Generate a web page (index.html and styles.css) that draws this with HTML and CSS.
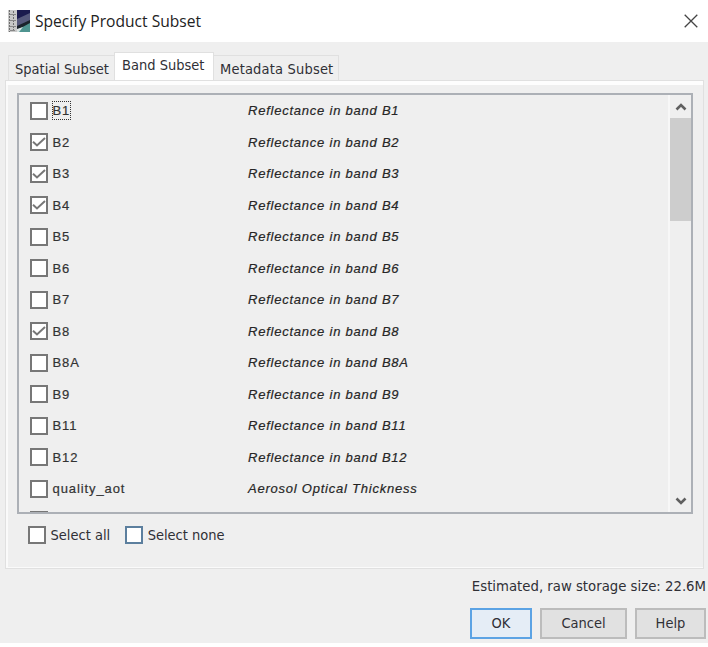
FILE: index.html
```
<!DOCTYPE html>
<html lang="en">
<head>
<meta charset="utf-8">
<title>Specify Product Subset</title>
<link rel="stylesheet" href="styles.css">
</head>
<body>
<div class="dialog">
  <header class="titlebar">
    <svg class="logo" viewBox="0 0 22 22" width="22" height="22">
      <path fill="#c9c9c9" d="M0 0h9v22H0z"/>
      <path stroke="#6e6e6e" stroke-width="1" stroke-dasharray="2 1" d="M1.500 0v22M5.500 1v21"/>
      <path stroke="#888" stroke-width="1" d="M2 4.500h6M2 10.500h6M2 16.500h6M2 20.500h5"/>
      <path fill="#1b1b4e" d="M9 0h13v22H9z"/>
      <path fill="#56597c" d="M9 9 22 3v8L9 17z"/>
      <path fill="#1b222b" d="M9 16 22 10v5L9 21z"/>
      <path fill="#4f9490" d="M9 20l13-7v9H9z"/>
      <path fill="#dce5e5" d="M9 19l6-2-4 5H9z"/>
    </svg>
    <h1 class="title">Specify Product Subset</h1>
    <svg class="close" viewBox="0 0 14 14" width="14" height="14"><path d="M.7.7l12.600 12.600M13.300.7L.7 13.300" stroke="#444" stroke-width="1.300"/></svg>
  </header>
  <nav class="tabs">
    <div class="tab tab-first">Spatial Subset</div>
    <div class="tab tab-active">Band Subset</div>
    <div class="tab tab-last">Metadata Subset</div>
  </nav>
  <main class="panel">
    <div class="listbox">
      <div class="rows" id="rows"></div>
      <div class="scrollbar">
        <svg viewBox="0 0 12 8" width="12" height="8"><path d="M1.500 6.500 6 2l4.500 4.500" fill="none" stroke="#606060" stroke-width="2.600"/></svg>
        <div class="thumb"></div>
        <svg class="down" viewBox="0 0 12 8" width="12" height="8"><path d="M1.500 1.500 6 6l4.500-4.500" fill="none" stroke="#606060" stroke-width="2.600"/></svg>
      </div>
    </div>
    <div class="selectors">
      <label class="choice"><span class="box"></span>Select all</label>
      <label class="choice"><span class="box box-hot"></span>Select none</label>
    </div>
  </main>
  <p class="estimate">Estimated, raw storage size: 22.6M</p>
  <footer class="buttons">
    <button class="btn btn-ok">OK</button>
    <button class="btn btn-cancel">Cancel</button>
    <button class="btn btn-help">Help</button>
  </footer>
</div>
<script src="bands.js"></script>
</body>
</html>
```
FILE: styles.css
```
* { box-sizing: border-box; }
body {
  margin: 0;
  background: #fff;
  color: #303036;
  font: 14.5px/20px "DejaVu Sans Condensed", "DejaVu Sans", sans-serif;
  font-stretch: condensed;
}
.dialog { width: 708px; height: 643px; background: #efefef; overflow: hidden; }
.titlebar { display: flex; align-items: center; height: 42px; padding: 0 10px 1px 8px; background: #fff; }
.logo { margin-right: 5px; }
.title { margin: 0; flex: 1; font: 15.6px/22px "Open Sans", sans-serif; color: #222; }

.tabs { display: flex; align-items: flex-end; height: 38px; padding-left: 8px; }
.tab { height: 25px; padding: 3px 0 0 6px; border: 1.5px solid #e0e0e0; border-bottom: 0; white-space: nowrap; }
.tab-first { width: 106px; border-right: 0; }
.tab-active { width: 100px; height: 28px; padding: 2px 0 0 7px; background: #fff; }
.tab-last { width: 125px; border-left: 0; letter-spacing: .18px; }

.panel {
  width: 699px;
  height: 489px;
  margin-left: 5px;
  padding: 12px 10px 0 11px;
  border: 1px solid #e0e0e0;
  box-shadow: inset 0 4px #fdfdfd, inset 2px 0 #fafafa, inset 0 -1px #fafafa;
}
.listbox { display: flex; height: 421px; border: 2px solid #acb0b6; overflow: hidden; }
.rows {
  flex: 1;
  overflow: hidden;
  font: 13px/31.5px "Liberation Sans", Arial, sans-serif;
  letter-spacing: .77px;
  color: #333;
  -webkit-text-stroke: .2px #333;
}
.row {
  display: grid;
  grid-template-columns: 18px 190.500px 1fr;
  align-items: center;
  column-gap: 5px;
  height: 31.5px;
  padding-left: 10.500px;
}
.row em { color: #222; }
.name { justify-self: start; line-height: 17px; letter-spacing: .9px; }
.focused { outline: 1px dotted #333; }
.box { display: block; width: 18px; height: 18px; flex: none; border: 2px solid #777; background: #fff; }
.box svg { display: block; width: 100%; height: 100%; }
.box-hot { border-color: #5c7f9e; }
.scrollbar { display: flex; flex-direction: column; align-items: center; width: 23px; padding: 8px 0 7px; border-left: 2px solid #f7f7f7; }
.thumb { width: 21px; height: 103px; margin-top: 7px; background: #cdcdcd; }
.down { margin-top: auto; }

.selectors { display: flex; gap: 15px; padding: 12px 0 0 11px; }
.choice { display: flex; align-items: center; gap: 4.500px; height: 18px; }

.estimate { margin: 7px 2px 0 0; text-align: right; font-size: 14.75px; line-height: 20px; }
.buttons { display: flex; justify-content: flex-end; gap: 8px; margin-top: 12px; padding-right: 2px; }
.btn { height: 31px; padding: 0 0 2px; border: 2px solid #bcbcbc; background: #e1e1e1; color: #303036; font: inherit; }
.btn-ok { width: 62px; border-color: #5ca3e4; background: #e5edf6; }
.btn-cancel { width: 87px; }
.btn-help { width: 71px; }
```
FILE: bands.js
```
const bands = [
  ['B1'], ['B2', true], ['B3', true], ['B4', true], ['B5'], ['B6'], ['B7'],
  ['B8', true], ['B8A'], ['B9'], ['B11'], ['B12'],
  ['quality_aot', false, 'Aerosol Optical Thickness'], ['', false, ' ']
];
const check = '<svg viewBox="0 0 14 14"><path d="M1 6.800 5 10.500 13 3" fill="none" stroke="#777" stroke-width="2"/></svg>';
document.getElementById('rows').innerHTML = bands.map(([name, on, text], i) =>
  `<div class="row"><span class="box">${on ? check : ''}</span>` +
  `<span class="name${i === 0 ? ' focused' : ''}">${name}</span>` +
  `<em>${text || 'Reflectance in band ' + name}</em></div>`).join('');
```
